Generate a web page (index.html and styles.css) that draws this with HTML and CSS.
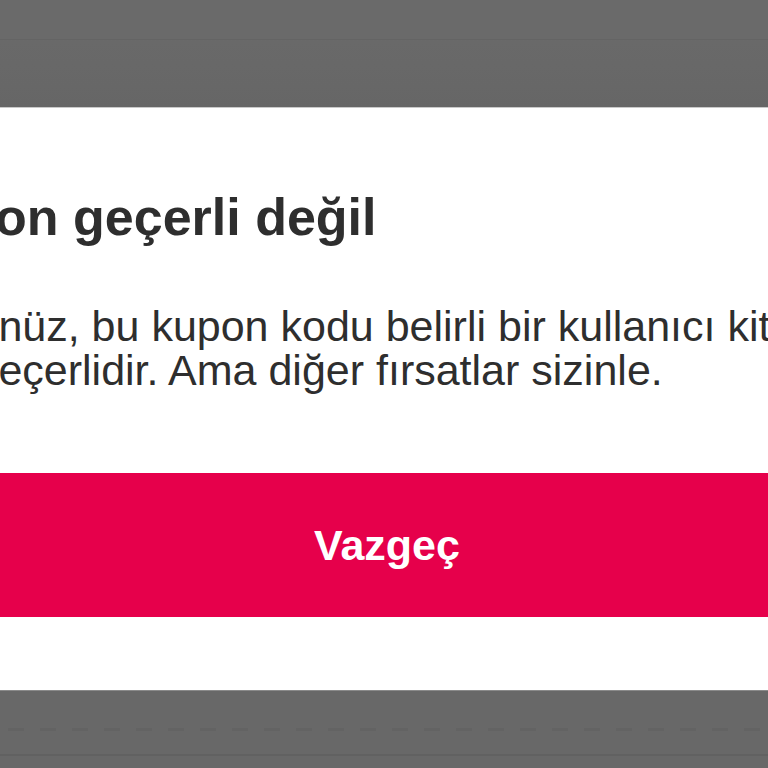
FILE: index.html
```html
<!DOCTYPE html>
<html lang="tr">
<head>
<meta charset="utf-8">
<title>Kupon geçerli değil</title>
<link rel="stylesheet" href="styles.css">
</head>
<body>
<div class="backdrop-top">
  <div class="top-bar"></div>
</div>
<div class="modal">
  <h1 class="title">Kupon geçerli değil</h1>
  <p class="message">Üzgünüz, bu kupon kodu belirli bir kullanıcı kitlesi için geçerlidir. Ama diğer fırsatlar sizinle.</p>
  <button class="btn">Vazgeç</button>
</div>
<div class="backdrop-bottom">
  <div class="dashes"></div>
  <div class="card-edge"></div>
</div>
</body>
</html>
```
FILE: styles.css
```css
html, body {
  margin: 0;
  padding: 0;
  height: 768px;
  overflow: hidden;
  background: #686868;
  font-family: "Liberation Sans", Arial, sans-serif;
}
.backdrop-top {
  height: 107px;
  background: linear-gradient(#6b6b6b, #666666);
}
.top-bar {
  height: 40px;
  border-bottom: 1px solid #646464;
  box-sizing: border-box;
  background: #6a6a6a;
}
.modal {
  height: 583px;
  box-sizing: border-box;
  background: #ffffff;
  border-top: 1px solid #c9c9c9;
  margin: 0 -146px 0 -140px;
  padding: 78px 38px 0 38px;
  display: flex;
  flex-direction: column;
}
.title {
  margin: 0 0 0 -4px;
  font-size: 52px;
  line-height: 62px;
  font-weight: 700;
  color: #2e2e2e;
  letter-spacing: 0;
}
.message {
  margin: 56px 0 0 0;
  font-size: 43px;
  line-height: 44px;
  font-weight: 400;
  color: #2e2e2e;
}
.btn {
  margin: 81px 0 0 0;
  height: 144px;
  border: none;
  background: #e6004b;
  color: #ffffff;
  font-family: "Liberation Sans", Arial, sans-serif;
  font-size: 43px;
  font-weight: 700;
  padding: 0;
}
.backdrop-bottom {
  height: 78px;
  border-top: 1px solid #8a8a8a;
  box-sizing: border-box;
  background: #686868;
  padding-top: 37px;
}
.dashes {
  height: 3px;
  background: repeating-linear-gradient(90deg, #636363 0 16px, transparent 16px 32px);
  margin-left: 8px;
}
.card-edge {
  margin-top: 23px;
  height: 2px;
  background: #616161;
}
```
